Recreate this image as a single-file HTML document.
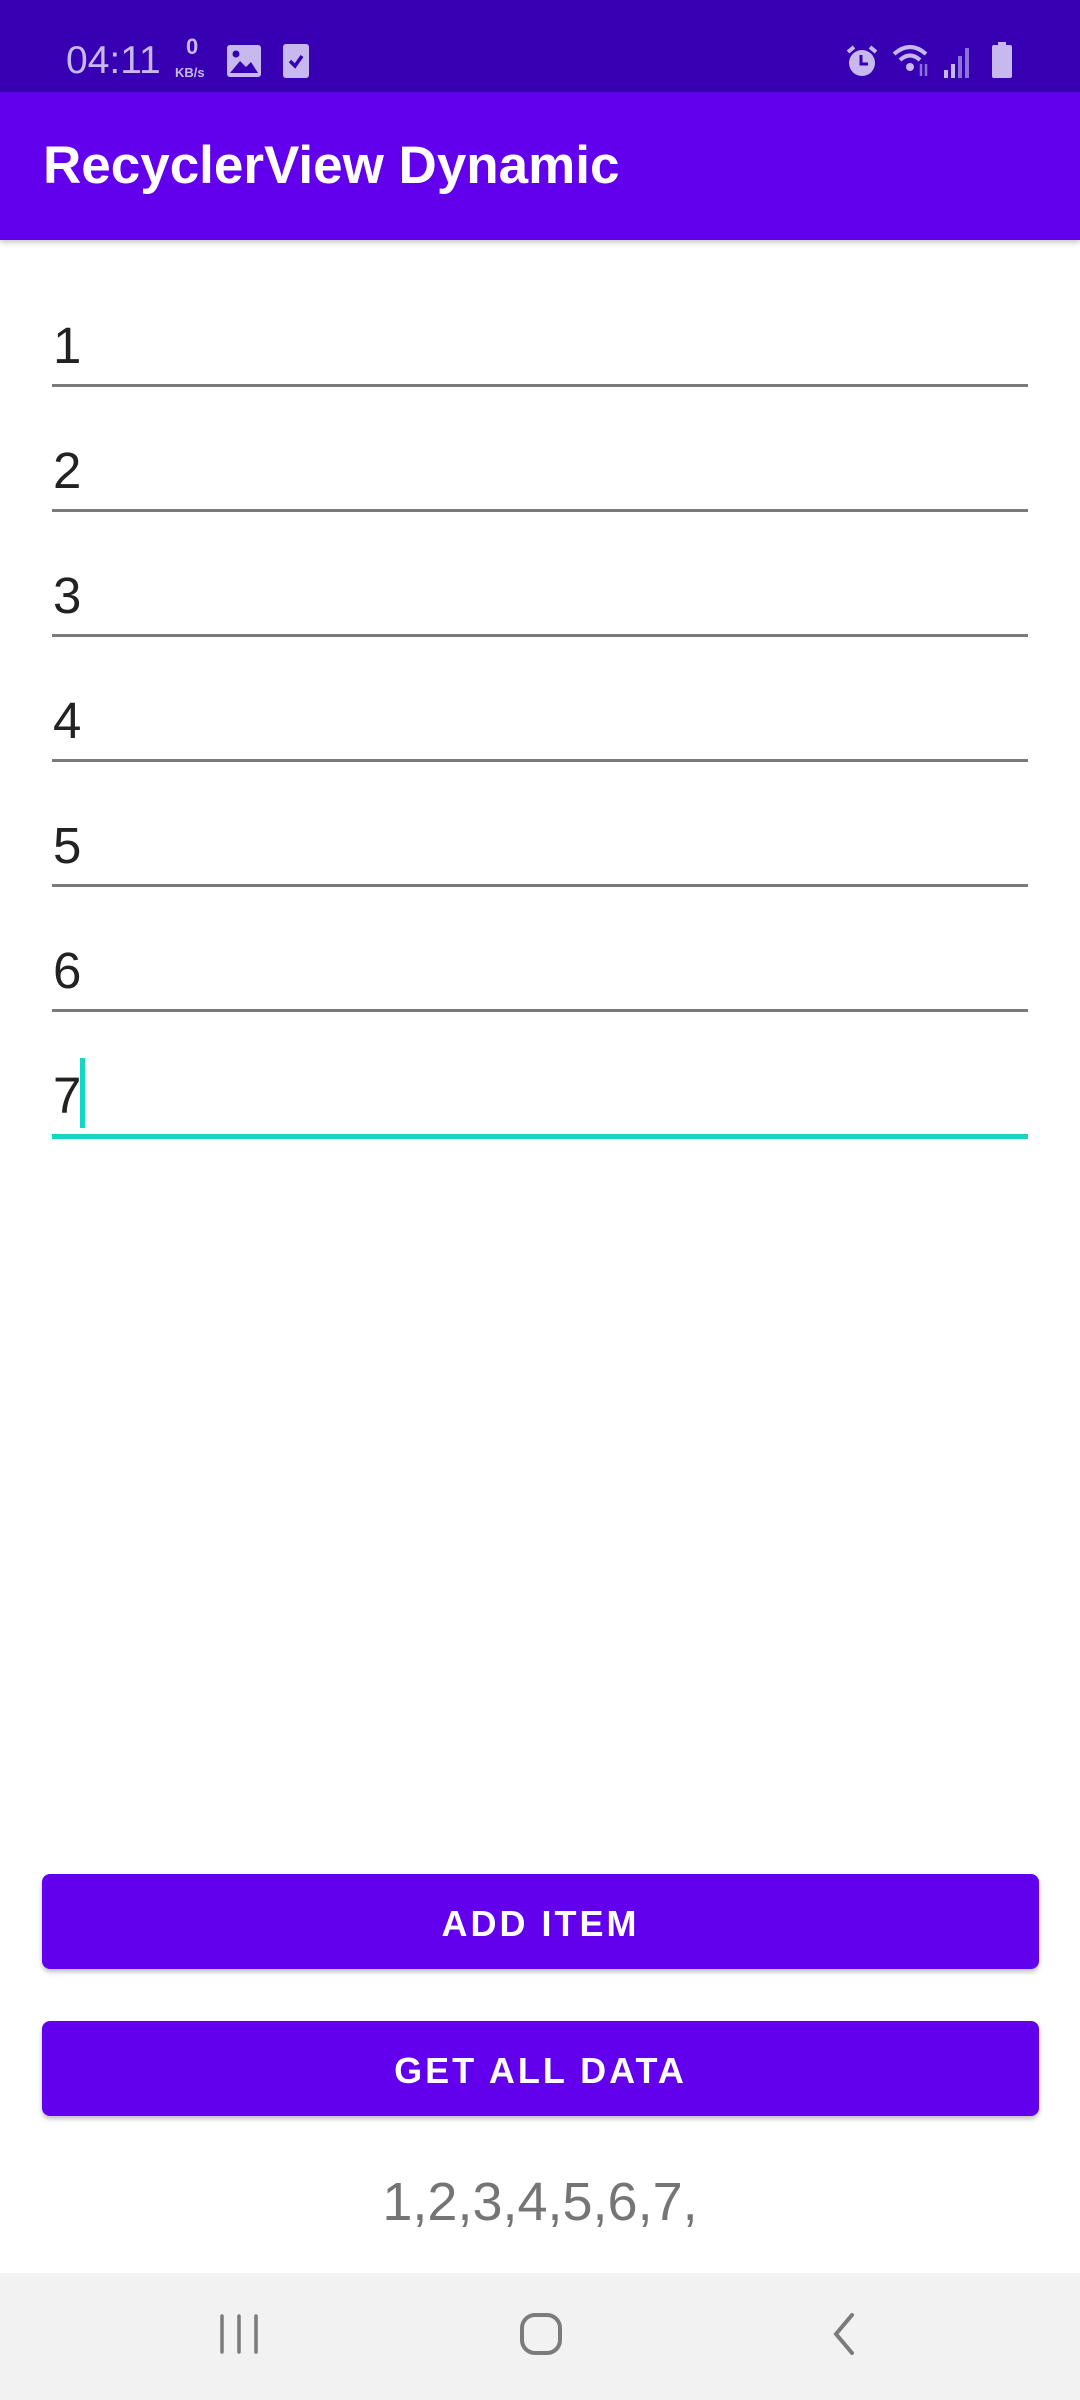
<!DOCTYPE html>
<html><head><meta charset="utf-8"><style>
*{margin:0;padding:0;box-sizing:border-box}
body{width:1080px;height:2400px;position:relative;background:#fff;font-family:"Liberation Sans",sans-serif;overflow:hidden}
.abs{position:absolute}
.sb{left:0;top:0;width:1080px;height:92px;background:#3700B3}
.tb{left:0;top:92px;width:1080px;height:148px;background:#6200EE;box-shadow:0 2px 6px rgba(0,0,0,.25)}
.title{left:43px;top:134px;color:#fff;font-size:53px;line-height:64px;font-weight:bold}
.num{left:53px;font-size:51px;line-height:60px;color:#222}
.ln{left:52px;width:976px;height:3px;background:#7a7a7a}
.btn{left:42px;width:997px;height:95px;background:#6200EE;border-radius:8px;box-shadow:0 3px 5px rgba(0,0,0,.25);color:#fff;font-size:36px;letter-spacing:3px;text-align:center;line-height:99px;font-weight:bold}
.nav{left:0;top:2273px;width:1080px;height:127px;background:#f2f2f2}
</style></head><body>
<div class="abs sb"></div>
<div class="abs" style="left:66px;top:39px;color:#c7b8ee;font-size:39px;line-height:44px">04:11</div>
<div class="abs" style="left:186px;top:36px;color:#c7b8ee;font-size:22px;line-height:22px;font-weight:bold">0</div>
<div class="abs" style="left:175px;top:66px;color:#c7b8ee;font-size:13px;line-height:14px;font-weight:bold">KB/s</div>
<svg class="abs" style="left:226px;top:44px" width="36" height="34"><rect x="1" y="1" width="34" height="32" rx="3" fill="#c7b8ee"/><circle cx="10" cy="10" r="3.5" fill="#3700B3"/><path d="M4 29 L14 17 L20 23 L25 18 L32 29 Z" fill="#3700B3"/></svg>
<svg class="abs" style="left:283px;top:44px" width="26" height="34"><rect x="0" y="0" width="26" height="34" rx="3" fill="#c7b8ee"/><path d="M7 17 L12 22 L19 12" stroke="#3700B3" stroke-width="3.5" fill="none"/></svg>
<svg class="abs" style="left:844px;top:44px" width="36" height="34"><circle cx="18" cy="19" r="13" fill="#c7b8ee"/><path d="M4 8 L10 3 M32 8 L26 3" stroke="#c7b8ee" stroke-width="4"/><path d="M17 11 V20 H24" stroke="#3700B3" stroke-width="3" fill="none"/></svg>
<svg class="abs" style="left:892px;top:42px" width="40" height="36"><path d="M2 12 Q18 -2 34 12" stroke="#c7b8ee" stroke-width="4" fill="none"/><path d="M8 18 Q18 9 28 18" stroke="#c7b8ee" stroke-width="4" fill="none"/><circle cx="18" cy="25" r="4" fill="#c7b8ee"/><path d="M29 22v12M34 34V22" stroke="#8a74d8" stroke-width="2.5"/></svg>
<svg class="abs" style="left:942px;top:44px" width="30" height="34"><rect x="2" y="26" width="4" height="8" fill="#c7b8ee"/><rect x="9" y="20" width="4" height="14" fill="#c7b8ee"/><rect x="16" y="12" width="4" height="22" fill="#8a74d8"/><rect x="23" y="4" width="4" height="30" fill="#8a74d8"/></svg>
<svg class="abs" style="left:991px;top:42px" width="22" height="36"><rect x="7" y="0" width="8" height="4" fill="#c7b8ee"/><rect x="1" y="3" width="20" height="33" rx="2" fill="#c7b8ee"/></svg>
<div class="abs tb"></div>
<div class="abs title">RecyclerView Dynamic</div>

<div class="abs num" style="top:316px">1</div><div class="abs ln" style="top:384px"></div>
<div class="abs num" style="top:441px">2</div><div class="abs ln" style="top:509px"></div>
<div class="abs num" style="top:566px">3</div><div class="abs ln" style="top:634px"></div>
<div class="abs num" style="top:691px">4</div><div class="abs ln" style="top:759px"></div>
<div class="abs num" style="top:816px">5</div><div class="abs ln" style="top:884px"></div>
<div class="abs num" style="top:941px">6</div><div class="abs ln" style="top:1009px"></div>
<div class="abs num" style="top:1066px">7</div>
<div class="abs" style="left:80px;top:1058px;width:5px;height:70px;background:#14d6c5"></div>
<div class="abs" style="left:52px;top:1134px;width:976px;height:5px;background:#14d6c5"></div>

<div class="abs btn" style="top:1874px">ADD ITEM</div>
<div class="abs btn" style="top:2021px">GET ALL DATA</div>
<div class="abs" style="left:0;width:1080px;top:2167px;text-align:center;color:#757575;font-size:54px;line-height:70px">1,2,3,4,5,6,7,</div>

<div class="abs nav"></div>
<svg class="abs" style="left:218px;top:2312px" width="44" height="44"><path d="M4 4v36M21 4v36M38 4v36" stroke="#7b7b7b" stroke-width="3.5" stroke-linecap="round"/></svg>
<svg class="abs" style="left:519px;top:2312px" width="44" height="44"><rect x="3" y="3" width="38" height="38" rx="13" stroke="#7b7b7b" stroke-width="4" fill="none"/></svg>
<svg class="abs" style="left:828px;top:2312px" width="30" height="44"><path d="M24 3 L8 22 L24 41" stroke="#7b7b7b" stroke-width="4" fill="none" stroke-linecap="round"/></svg>
</body></html>
